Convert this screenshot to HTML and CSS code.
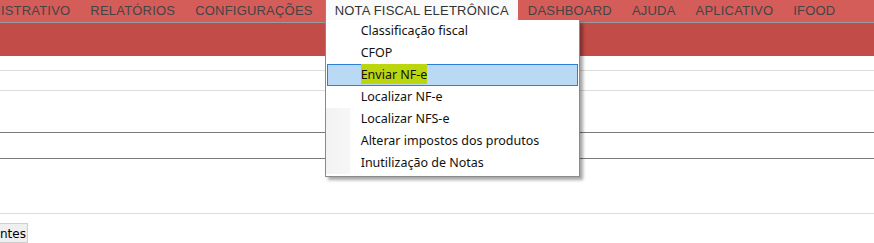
FILE: index.html
```html
<!DOCTYPE html>
<html lang="pt-BR">
<head>
  <meta charset="UTF-8">
  <title>Sistema</title>
  <link rel="stylesheet" href="styles.css">
</head>
<body>
  <div class="menubar">
    <a class="menu-item first" href="#adm">ADMINISTRATIVO</a>
    <a class="menu-item" href="#rel">RELATÓRIOS</a>
    <a class="menu-item" href="#conf">CONFIGURAÇÕES</a>
    <div class="menu-item open">
      NOTA FISCAL ELETRÔNICA
      <ul class="dropdown">
        <li>Classificação fiscal</li>
        <li>CFOP</li>
        <li class="active"><span class="mark">Enviar NF-e</span></li>
        <li>Localizar NF-e</li>
        <li class="gutter">Localizar NFS-e</li>
        <li class="gutter">Alterar impostos dos produtos</li>
        <li class="gutter">Inutilização de Notas</li>
      </ul>
    </div>
    <a class="menu-item" href="#dash">DASHBOARD</a>
    <a class="menu-item" href="#ajuda">AJUDA</a>
    <a class="menu-item" href="#app">APLICATIVO</a>
    <a class="menu-item" href="#ifood">IFOOD</a>
  </div>

  <div class="band"></div>

  <div class="content">
    <div class="row r1"></div>
    <div class="row r2"></div>
    <div class="row r3"></div>
    <div class="row r4"></div>
    <div class="row r5"></div>
  </div>

  <div class="tabs">
    <span class="tab">ntes</span>
  </div>
</body>
</html>
```

FILE: styles.css
```css
html, body {
  margin: 0;
  padding: 0;
  background: #fff;
  overflow: hidden;
}
body {
  font-family: "Liberation Sans", Arial, sans-serif;
}
.menubar {
  display: flex;
  height: 22px;
  background-color: #d45d59;
  border-bottom: 1px solid #9c9c9c;
  position: relative;
  z-index: 2;
}
.menu-item {
  display: block;
  padding: 0 10px;
  line-height: 21px;
  font-size: 13px;
  letter-spacing: 0.2px;
  color: #444;
  text-decoration: none;
  white-space: nowrap;
}
.menu-item.first {
  margin-left: -52px;
}
.menu-item.open {
  position: relative;
  background: #fafafa;
  border-left: 1px solid #8a8a8a;
  padding: 0 9px;
  height: 20px;
  color: #333;
  margin-left: 2px;
}
.dropdown {
  position: absolute;
  top: 20px;
  left: -1px;
  width: 253px;
  margin: 0;
  padding: 0 0 2px;
  list-style: none;
  background: #fff;
  border: 1px solid #8a8a8a;
  border-top: none;
  box-shadow: 3px 3px 3px rgba(0, 0, 0, 0.35);
  font-family: "Noto Sans", "Open Sans", sans-serif;
  font-size: 12.5px;
  letter-spacing: 0;
  color: #111;
}
.dropdown li {
  height: 22px;
  line-height: 22px;
  padding-left: 35px;
  box-sizing: border-box;
}
.dropdown li.gutter {
  background: linear-gradient(90deg, #f2f2f2 0, #f7f7f7 24px, #fff 25px);
}
.dropdown li.active {
  background: #b9d9f5;
  border: 1px solid #2a7fd6;
  margin: 0 1px;
  padding-left: 33px;
  line-height: 20px;
}
.mark {
  background: #bcd60e;
  padding: 2px 0 1px;
}
.band {
  height: 33px;
  background-color: #c24c48;
}
.row {
  border-bottom: 1px solid #dcdcdc;
}
.r1 { height: 14px; }
.r2 { height: 19px; }
.r3 { height: 41px; border-bottom-color: #7a7a7a; }
.r4 { height: 25px; border-bottom-color: #7a7a7a; }
.r5 { height: 54px; }
.tabs {
  margin-top: 9px;
  display: flex;
}
.tab {
  display: block;
  height: 20px;
  width: 28px;
  box-sizing: border-box;
  background: #efefef;
  border: 1px solid #cfcfcf;
  border-left: none;
  font-family: "DejaVu Sans", Verdana, sans-serif;
  font-size: 12px;
  line-height: 20px;
  color: #000;
  overflow: hidden;
}
```
